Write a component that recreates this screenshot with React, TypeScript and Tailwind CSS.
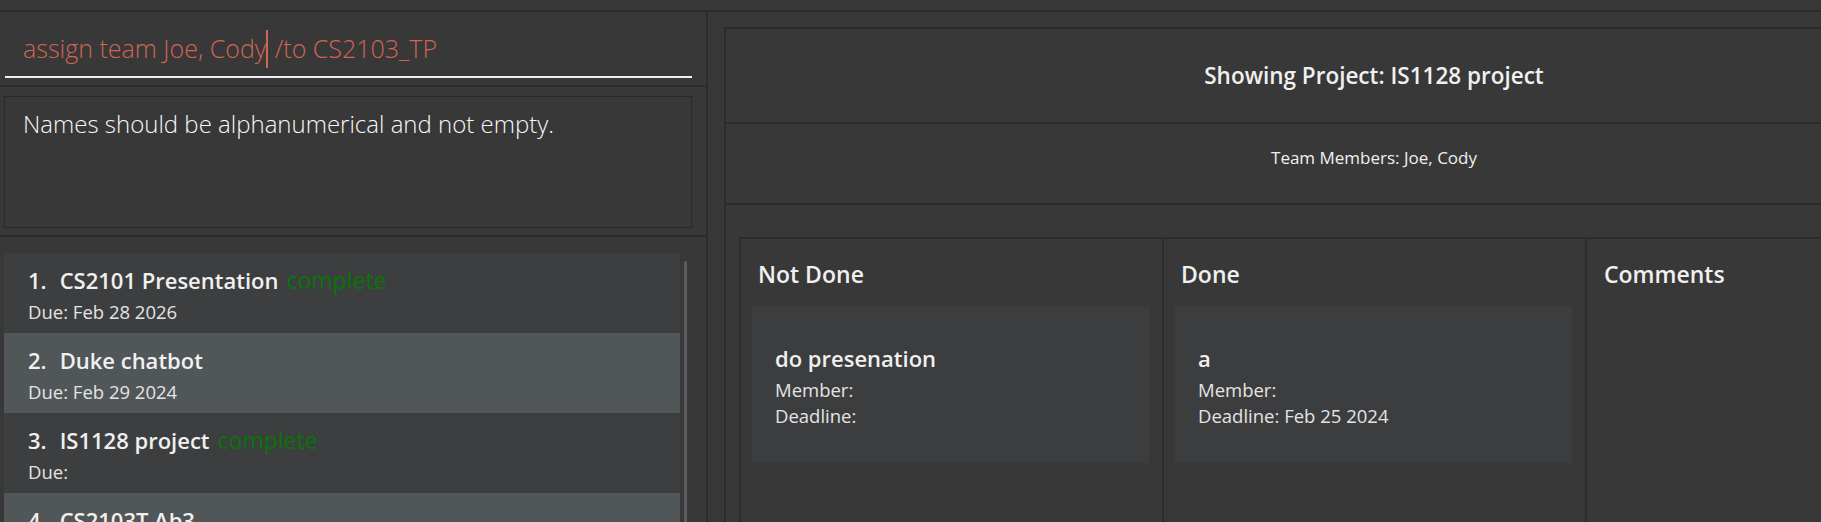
// Project tracker window: command box, result display, project list on the left,
// project detail with kanban columns on the right.

type Project = { name: string; due: string; complete: boolean };
type Task = { name: string; member: string; deadline: string };

const projects: Project[] = [
  { name: "CS2101 Presentation", due: "Feb 28 2026", complete: true },
  { name: "Duke chatbot", due: "Feb 29 2024", complete: false },
  { name: "IS1128 project", due: "", complete: true },
  { name: "CS2103T Ab3", due: "", complete: false },
];

const notDone: Task[] = [{ name: "do presenation", member: "", deadline: "" }];
const done: Task[] = [{ name: "a", member: "", deadline: "Feb 25 2024" }];

function ProjectRow({ index, project }: { index: number; project: Project }) {
  // odd rows dark, even rows lighter (same as the list-cell theme)
  const bg = index % 2 === 0 ? "bg-[#3c3e3f]" : "bg-[#515658]";
  return (
    <div className={`h-[80px] w-[676px] pl-[24px] pt-[13px] ${bg}`}>
      <div className="flex items-baseline gap-[13px] text-[22px] leading-[28px] font-semibold text-[#f0f0f0]">
        <span>{index + 1}.</span>
        <span className="flex items-baseline gap-[8px]">
          {project.name}
          {project.complete && <span className="text-[23px] font-normal text-[#087508]">complete</span>}
        </span>
      </div>
      <div className="mt-[6px] text-[18.5px] leading-[24px] text-[#e4e4e4]">Due: {project.due}</div>
    </div>
  );
}

function TaskCard({ task }: { task: Task }) {
  return (
    <div className="ml-[11px] h-[157px] w-[397px] bg-[#3c3d3f] pl-[23px] pt-[38px]">
      <div className="text-[22px] leading-[28px] font-semibold text-[#f0f0f0]">{task.name}</div>
      <div className="mt-[5px] text-[18.5px] leading-[26px] text-[#e4e4e4]">Member: {task.member}</div>
      <div className="text-[18.5px] leading-[26px] text-[#e4e4e4]">Deadline: {task.deadline}</div>
    </div>
  );
}

function Column({ title, tasks, last }: { title: string; tasks: Task[]; last?: boolean }) {
  return (
    <div className={`w-[423px] flex-none ${last ? "" : "border-r-2 border-[#2c2c2c]"}`}>
      <div className="pl-[17px] pt-[20px] text-[23px] leading-[30px] font-semibold text-[#f0f0f0]">{title}</div>
      <div className="mt-[17px] flex flex-col gap-[12px]">
        {tasks.map((t) => (
          <TaskCard key={t.name} task={t} />
        ))}
      </div>
    </div>
  );
}

export default function App() {
  return (
    <div className="h-[522px] w-[1821px] overflow-hidden bg-[#383838] font-['Open_Sans','Noto_Sans',sans-serif]">
      {/* menu strip */}
      <div className="h-[12px] border-b-2 border-[#2c2c2c]" />

      <div className="flex h-[510px]">
        {/* left column */}
        <div className="flex w-[708px] flex-none flex-col border-r-2 border-[#2c2c2c]">
          <div className="h-[75px] flex-none border-b-2 border-[#2c2c2c] pl-[5px] pr-[14px] pt-[10px]">
            <div className="flex h-[56px] items-center border-b-2 border-[#f0f0f0] pl-[18px] text-[25px] font-light text-[#d06651]">
              <span className="whitespace-pre">assign team Joe, Cody</span>
              <span className="inline-block h-[38px] w-[2px] bg-[#d06651]" />
              <span className="whitespace-pre"> /to CS2103_TP</span>
            </div>
          </div>

          <div className="h-[150px] flex-none border-b-2 border-[#2c2c2c] pl-[4px] pr-[14px] pt-[9px]">
            <div className="h-[132px] border border-[#2a2a2a] pl-[18px] pt-[12px] text-[24px] leading-[30px] font-light text-[#f7f7f7]">
              Names should be alphanumerical and not empty.
            </div>
          </div>

          <div className="relative flex-1 overflow-hidden pl-[4px] pt-[16px]">
            {projects.map((p, i) => (
              <ProjectRow key={p.name} index={i} project={p} />
            ))}
            {/* scrollbar thumb */}
            <div className="absolute left-[684px] top-[24px] h-[300px] w-[3px] rounded-full bg-[#5c5c5c]" />
          </div>
        </div>

        {/* right column */}
        <div className="w-[1316px] flex-none pl-[16px] pt-[15px]">
          <div className="h-[520px] w-[1300px] border-2 border-[#2c2c2c]">
            <div className="flex h-[95px] items-center justify-center border-b-2 border-[#2c2c2c] text-[22.5px] font-semibold text-[#f0f0f0]">
              Showing Project: IS1128 project
            </div>
            <div className="h-[81px] border-b-2 border-[#2c2c2c] pt-[23px] text-center text-[17px] leading-[22px] text-[#f0f0f0]">
              Team Members: Joe, Cody
            </div>
            <div className="pl-[13px] pt-[32px]">
              <div className="flex h-[400px] w-[1273px] border-2 border-[#2c2c2c]">
                <Column title="Not Done" tasks={notDone} />
                <Column title="Done" tasks={done} />
                <Column title="Comments" tasks={[]} last />
              </div>
            </div>
          </div>
        </div>
      </div>
    </div>
  );
}
